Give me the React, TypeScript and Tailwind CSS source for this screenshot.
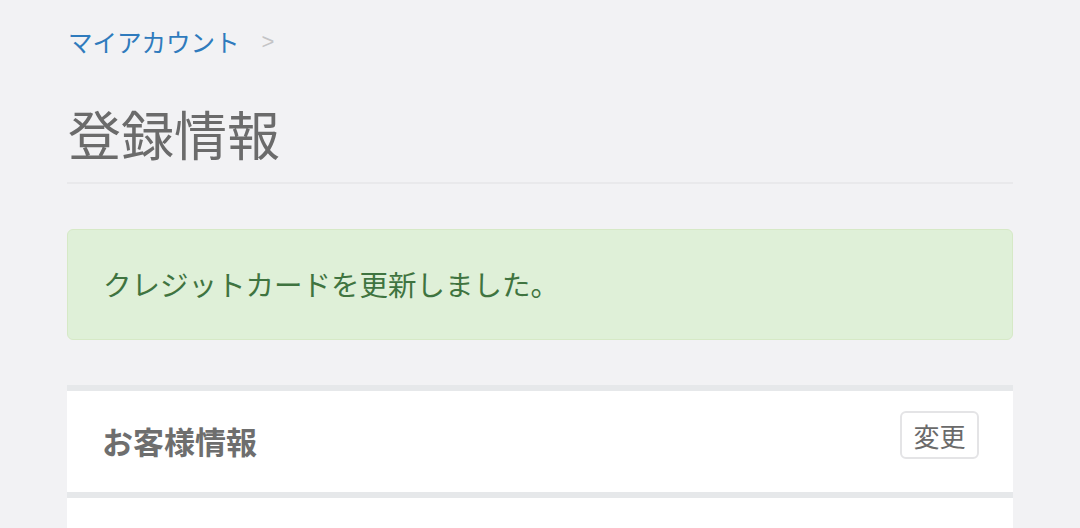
export default function App() {
  const jp = { fontFamily: '"Noto Sans CJK JP", "Noto Sans", sans-serif' };
  return (
    <div className="min-h-screen w-full bg-[#f2f2f4] overflow-hidden" style={jp}>
      <div className="w-[946px] ml-[67px] pt-[24px]">
        <div className="flex items-center h-[36px]">
          <span className="text-[24.5px] leading-[36px] text-[#2f7bbd] ml-[1px]">マイアカウント</span>
          <span
            className="ml-[22px] text-[22px] leading-[36px] text-[#c4c4c6]"
            style={{ fontFamily: '"Liberation Sans", sans-serif' }}
          >
            &gt;
          </span>
        </div>
        <div className="mt-[41px] pb-[16px] border-b-2 border-[#e9e9eb]">
          <h1 className="text-[53px] leading-[65px] text-[#6b6b6b] font-normal ml-[1px]">登録情報</h1>
        </div>
        <div className="mt-[45px] h-[111px] flex items-center px-[35px] bg-[#dff0d8] border border-[#d6e9c6] rounded-[6px]">
          <span className="text-[28.5px] text-[#3f7440]">クレジットカードを更新しました。</span>
        </div>
        <div className="mt-[45px] bg-white border-t-[6px] border-[#e6e8ea]">
          <div className="h-[107px] flex items-center justify-between pl-[35px] pr-[34px] border-b-[6px] border-[#e6e8ea]">
            <span className="text-[31px] font-bold text-[#6e6e6e]">お客様情報</span>
            <button className="self-start mt-[20px] h-[48px] w-[79px] flex items-center justify-center border-2 border-[#e4e4e6] rounded-[6px] bg-white text-[26px] text-[#6a6a6a]">
              変更
            </button>
          </div>
          <div className="h-[200px] bg-white" />
        </div>
      </div>
    </div>
  );
}
